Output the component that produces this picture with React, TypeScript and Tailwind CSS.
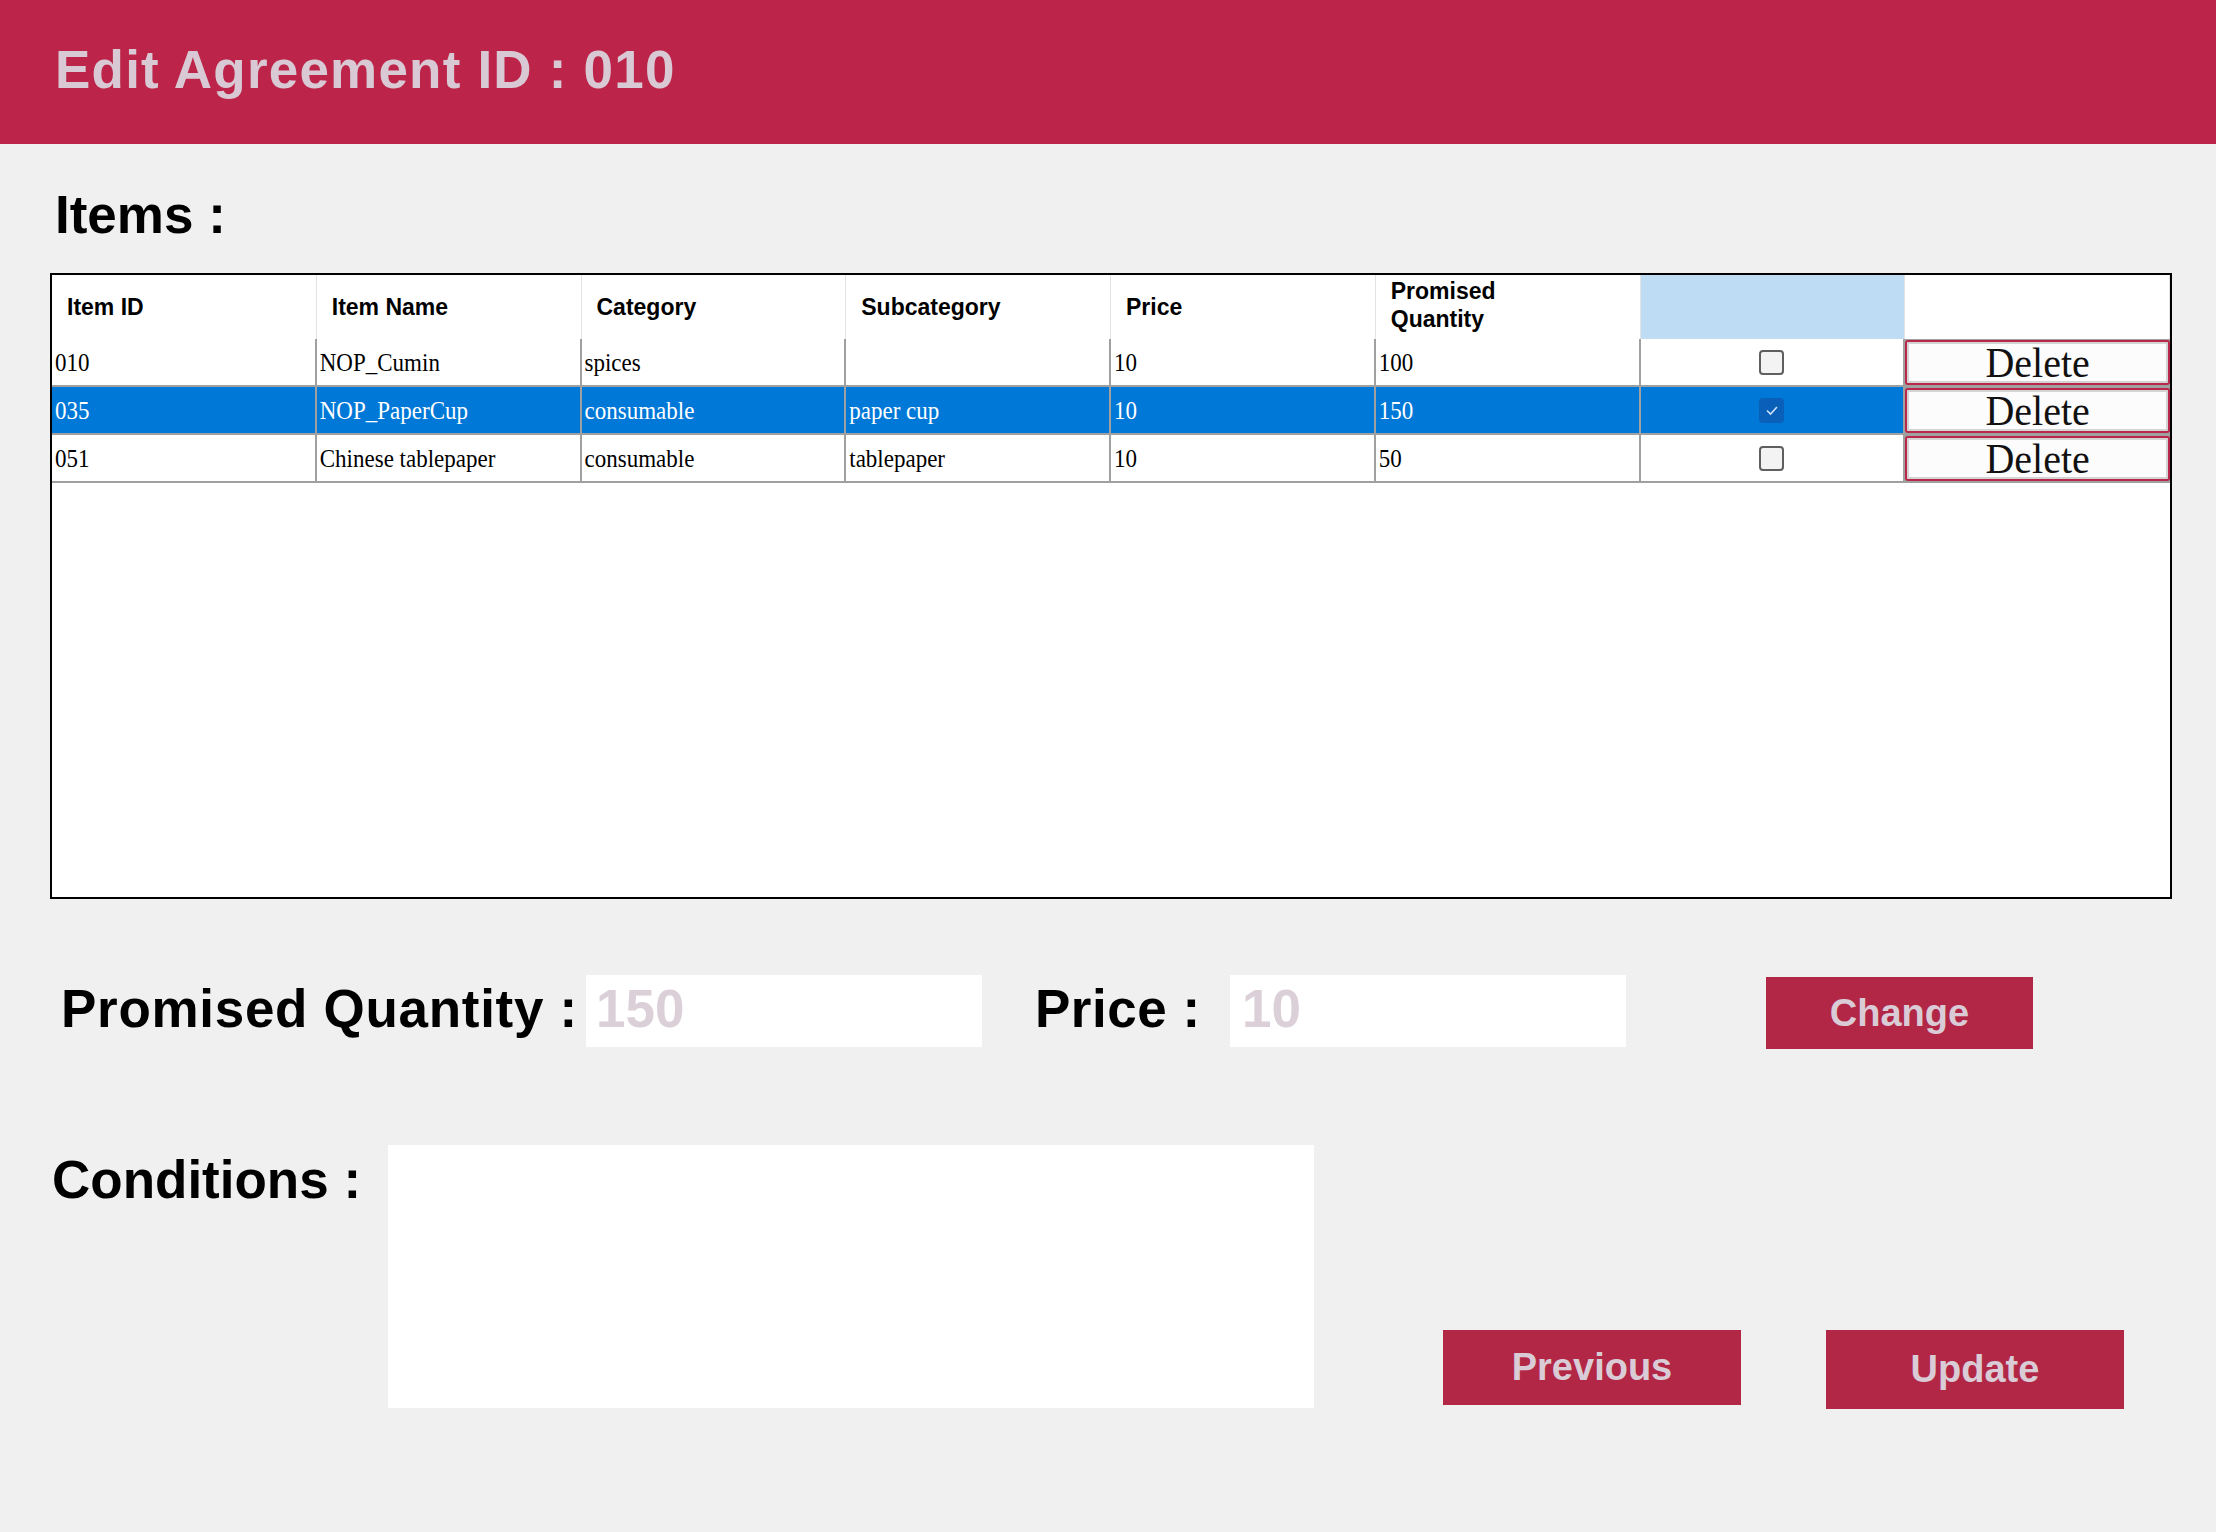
import React from "react";

const sans = { fontFamily: '"Liberation Sans", Arial, sans-serif' };
const serif = { fontFamily: '"Liberation Serif", "Times New Roman", serif' };

type Row = {
  id: string;
  name: string;
  category: string;
  sub: string;
  price: string;
  qty: string;
  checked: boolean;
  selected: boolean;
};

const rows: Row[] = [
  { id: "010", name: "NOP_Cumin", category: "spices", sub: "", price: "10", qty: "100", checked: false, selected: false },
  { id: "035", name: "NOP_PaperCup", category: "consumable", sub: "paper cup", price: "10", qty: "150", checked: true, selected: true },
  { id: "051", name: "Chinese tablepaper", category: "consumable", sub: "tablepaper", price: "10", qty: "50", checked: false, selected: false },
];

function HeaderCell({ children, blue }: { children?: React.ReactNode; blue?: boolean }) {
  return (
    <div
      className={
        "h-[64px] flex items-center pl-[15px] border-r border-[#e3e3e3] text-[23px] font-bold leading-[28px] text-black " +
        (blue ? "bg-[#bedcf3]" : "bg-white")
      }
      style={sans}
    >
      {children}
    </div>
  );
}

function DataCell({ children, selected }: { children?: React.ReactNode; selected: boolean }) {
  return (
    <div
      className={
        "h-[48px] flex items-center pl-[3px] border-r-2 border-b-2 border-[#a0a0a0] text-[23px] leading-none whitespace-nowrap overflow-hidden " +
        (selected ? "bg-[#0078d7] text-white" : "bg-white text-black")
      }
      style={serif}
    >
      <span className="inline-block scale-y-110">{children}</span>
    </div>
  );
}

function CheckCell({ checked, selected }: { checked: boolean; selected: boolean }) {
  return (
    <div
      className={
        "h-[48px] flex items-center justify-center border-r-2 border-b-2 border-[#a0a0a0] " +
        (selected ? "bg-[#0078d7]" : "bg-white")
      }
    >
      {checked ? (
        <div className="w-[25px] h-[25px] rounded-[4px] bg-[#0a5fb9] flex items-center justify-center">
          <svg width="14" height="12" viewBox="0 0 14 12">
            <polyline points="2,6.5 5.5,10 12,3" fill="none" stroke="#cfe0f5" strokeWidth="1.6" />
          </svg>
        </div>
      ) : (
        <div className="w-[25px] h-[25px] rounded-[4px] border-2 border-[#5f5f5f] bg-[#f3f3f3]" />
      )}
    </div>
  );
}

function DeleteCell() {
  return (
    <div className="h-[48px] border-b-2 border-[#a0a0a0] bg-[#a0a0a0] pt-[1px]">
      <div className="h-[45px] border-2 border-[#b8284a] rounded-[3px] bg-[#fcfcfc] shadow-[inset_0_0_0_2px_#d4d4d4] flex items-center justify-center">
        <span className="inline-block text-[40px] leading-none text-[#111] scale-y-105" style={serif}>
          Delete
        </span>
      </div>
    </div>
  );
}

function RedButton({ children, className }: { children: React.ReactNode; className: string }) {
  return (
    <button
      className={"bg-[#b32746] text-[#d9ccd6] text-[38px] font-bold flex items-center justify-center " + className}
      style={sans}
    >
      {children}
    </button>
  );
}

export default function App() {
  return (
    <div className="w-full min-h-[1532px] bg-[#f0f0f0]" style={sans}>
      <div className="h-[144px] bg-[#bc2549] flex items-center pl-[55px] pb-[6px]">
        <h1 className="text-[53px] font-bold leading-none text-[#d8c9d4] tracking-[1.2px]" style={sans}>
          Edit Agreement ID : 010
        </h1>
      </div>

      <div className="pl-[55px] mt-[44px] h-[52px] text-[53px] font-bold leading-none text-black" style={sans}>
        Items :
      </div>

      <div className="ml-[50px] mt-[33px] w-[2122px] h-[626px] border-2 border-black bg-white">
        <div className="grid grid-cols-8">
          <HeaderCell>Item ID</HeaderCell>
          <HeaderCell>Item Name</HeaderCell>
          <HeaderCell>Category</HeaderCell>
          <HeaderCell>Subcategory</HeaderCell>
          <HeaderCell>Price</HeaderCell>
          <HeaderCell>
            <span className="block pb-[4px]">
              Promised
              <br />
              Quantity
            </span>
          </HeaderCell>
          <HeaderCell blue />
          <HeaderCell />
          {rows.map((r) => (
            <React.Fragment key={r.id}>
              <DataCell selected={r.selected}>{r.id}</DataCell>
              <DataCell selected={r.selected}>{r.name}</DataCell>
              <DataCell selected={r.selected}>{r.category}</DataCell>
              <DataCell selected={r.selected}>{r.sub}</DataCell>
              <DataCell selected={r.selected}>{r.price}</DataCell>
              <DataCell selected={r.selected}>{r.qty}</DataCell>
              <CheckCell checked={r.checked} selected={r.selected} />
              <DeleteCell />
            </React.Fragment>
          ))}
        </div>
      </div>

      <div className="mt-[76px] flex items-start h-[74px]">
        <div className="ml-[61px] w-[525px] h-[72px] flex items-center pb-[6px] text-[53px] font-bold leading-none text-black whitespace-nowrap tracking-[0.7px]" style={sans}>
          Promised Quantity :
        </div>
        <div className="w-[396px] h-[72px] bg-white flex items-center pl-[10px] pb-[6px] text-[53px] font-bold leading-none text-[#dbd0d8]" style={sans}>
          150
        </div>
        <div className="ml-[53px] w-[195px] h-[72px] flex items-center pb-[6px] text-[53px] font-bold leading-none text-black whitespace-nowrap tracking-[0.5px]" style={sans}>
          Price :
        </div>
        <div className="w-[396px] h-[72px] bg-white flex items-center pl-[12px] pb-[6px] text-[53px] font-bold leading-none text-[#dbd0d8]" style={sans}>
          10
        </div>
        <RedButton className="ml-[140px] mt-[2px] w-[267px] h-[72px]">Change</RedButton>
      </div>

      <div className="mt-[96px] flex items-start">
        <div className="ml-[52px] w-[336px] pt-[8px] text-[53px] font-bold leading-none text-black whitespace-nowrap" style={sans}>
          Conditions :
        </div>
        <div className="w-[926px] h-[263px] bg-white" />
        <RedButton className="ml-[129px] mt-[185px] w-[298px] h-[75px]">Previous</RedButton>
        <RedButton className="ml-[85px] mt-[185px] w-[298px] h-[79px]">Update</RedButton>
      </div>
    </div>
  );
}
